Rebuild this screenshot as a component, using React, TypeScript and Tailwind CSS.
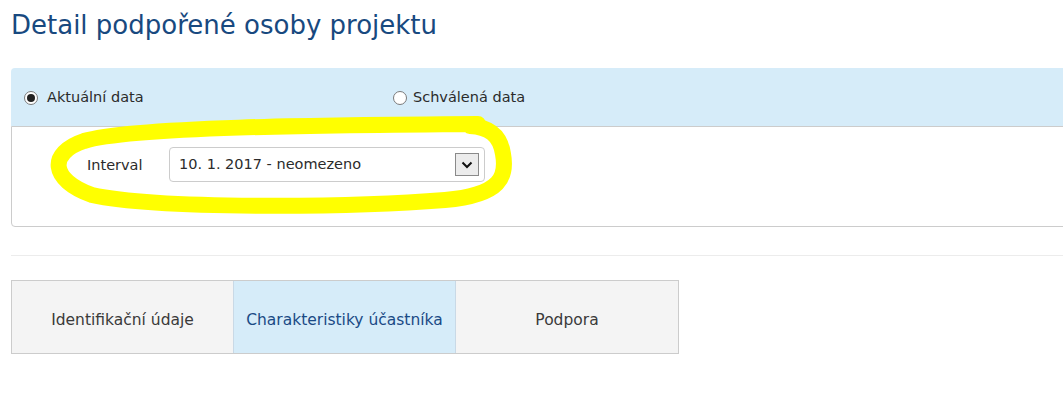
import React from "react";

function Radio({ checked }: { checked?: boolean }) {
  return (
    <span className="flex h-[14px] w-[14px] items-center justify-center rounded-full border border-[#7a7a7a] bg-white">
      {checked && <span className="h-[8px] w-[8px] rounded-full bg-[#222]" />}
    </span>
  );
}

export default function App() {
  const font = { fontFamily: '"DejaVu Sans", Verdana, sans-serif' };
  return (
    <div className="relative h-[401px] w-[1063px] overflow-hidden bg-white" style={font}>
      <div className="pl-[11px]">
        <h1 className="pt-[8px] text-[26px] leading-[34px] text-[#18497f]">Detail podpořené osoby projektu</h1>

        <div className="mt-[26px] w-[1070px]">
          <div className="flex h-[58px] items-center rounded-tl-[4px] bg-[#d6ecf9] pt-[2px] text-[14.5px] text-[#2b2b2b]">
            <label className="ml-[13px] flex w-[369px] items-center gap-[9px]">
              <Radio checked />
              <span>Aktuální data</span>
            </label>
            <label className="flex items-center gap-[6px]">
              <Radio />
              <span>Schválená data</span>
            </label>
          </div>
          <div className="flex h-[101px] items-start rounded-bl-[4px] border border-[#cccccc] bg-white">
            <div className="ml-[75px] mt-[20px] flex items-center">
              <span className="w-[82px] pt-[2px] text-[14.5px] text-[#2b2b2b]">Interval</span>
              <div className="flex h-[35px] w-[316px] items-center justify-between rounded-[4px] border border-[#cccccc] bg-white pl-[9px] pr-[5px] text-[14.5px] text-[#2b2b2b]">
                <span className="pt-[1px]">10. 1. 2017 - neomezeno</span>
                <span className="flex h-[23px] w-[24px] items-center justify-center border border-[#8a8a8a] bg-[#ececec]">
                  <svg width="12" height="8" viewBox="0 0 12 8">
                    <path d="M1.5 1.5 L6 6 L10.5 1.5" fill="none" stroke="#111" strokeWidth="2" />
                  </svg>
                </span>
              </div>
            </div>
          </div>
        </div>

        <div className="mt-[28px] h-px w-[1060px] bg-[#ececec]" />

        <div className="mt-[24px] flex h-[74px] w-[668px] border border-[#cccccc] text-[15.5px]">
          <div className="flex w-[221px] items-center justify-center bg-[#f4f4f4] pt-[7px] text-[#3a3a3a]">Identifikační údaje</div>
          <div className="flex w-[223px] items-center justify-center border-x border-[#c9d9e6] bg-[#d6ecf9] pt-[7px] text-[#1a4a85]">Charakteristiky účastníka</div>
          <div className="flex flex-1 items-center justify-center bg-[#f4f4f4] pt-[7px] text-[#3a3a3a]">Podpora</div>
        </div>
      </div>

      <svg className="pointer-events-none absolute left-0 top-0" width="1063" height="401" viewBox="0 0 1063 401">
        <path
          d="M 478 124 C 320 125, 130 127, 84 141 C 48 153, 50 180, 92 195 C 160 210, 360 207, 445 200 C 502 195, 507 176, 503 154 C 500 134, 488 127, 470 126"
          fill="none"
          stroke="#ffff00"
          strokeWidth="16"
          strokeLinecap="round"
        />
      </svg>
    </div>
  );
}
